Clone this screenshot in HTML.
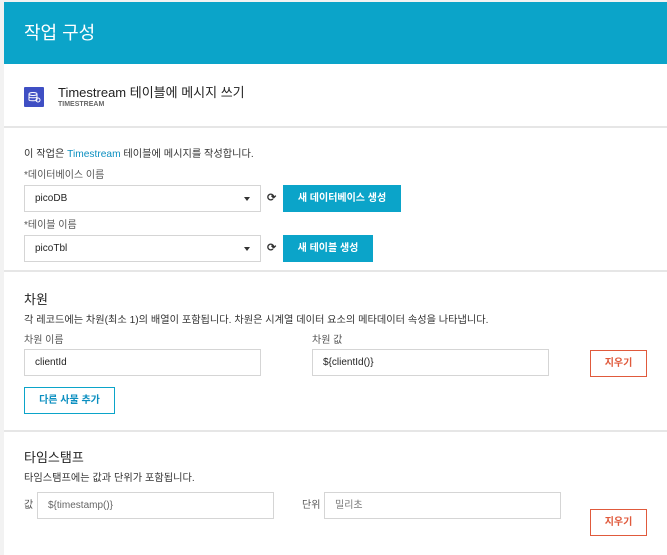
<!DOCTYPE html><html><head><meta charset="utf-8"><style>
*{box-sizing:border-box;margin:0;padding:0}
body{width:667px;height:555px;overflow:hidden;background:#f2f2f2;font-family:"Liberation Sans","Noto Sans CJK KR",sans-serif;color:#333;position:relative;line-height:1.2}
.a{position:absolute}
.main{left:4px;top:2px;width:663px;height:553px;background:#fff}
.hdr{left:4px;top:2px;width:663px;height:62px;background:#0ba4c9;color:#fff;font-size:18px;line-height:62px;padding-left:20px}
.hr{left:4px;width:663px;height:2px;background:#e6e6e6}
.t{font-size:10.2px;color:#333;white-space:nowrap}
.lbl{font-size:10px;color:#555;white-space:nowrap}
.box{border:1px solid #d5d5d5;background:#fff;font-size:10px;padding-left:10px;line-height:26px;color:#222;white-space:nowrap}
.btn{background:#0ba4c9;color:#fff;font-size:10px;font-weight:bold;text-align:center;line-height:28px}
.red{border:1px solid #e05a3c;color:#e05a3c;font-size:10px;font-weight:bold;text-align:center;line-height:26px;background:#fff}
.h2{font-size:13px;color:#222}
</style></head><body>
<div class="a main"></div>
<div class="a hdr">작업 구성</div>
<div class="a" style="left:24px;top:87px;width:20px;height:20px;background:#3f4fc4;border-radius:1px"><svg width="20" height="20"><ellipse cx="9" cy="7" rx="4" ry="1.5" fill="none" stroke="#fff" stroke-width="1"/><path d="M5 7v6c0 1 8 1 8 0V7M5 10c0 1 8 1 8 0" fill="none" stroke="#fff" stroke-width="1"/><circle cx="14" cy="13" r="2" fill="none" stroke="#fff" stroke-width="1"/></svg></div>
<div class="a" style="left:58px;top:85px;font-size:13px;line-height:16px;color:#222;white-space:nowrap">Timestream 테이블에 메시지 쓰기</div>
<div class="a" style="left:58px;top:101px;font-size:7px;line-height:8px;font-weight:bold;color:#666">TIMESTREAM</div>
<div class="a hr" style="top:126px"></div>
<div class="a t" style="left:24px;top:149px">이 작업은 <span style="color:#0b8fc0">Timestream</span> 테이블에 메시지를 작성합니다.</div>
<div class="a lbl" style="left:24px;top:170px">*데이터베이스 이름</div>
<div class="a box" style="left:24px;top:185px;width:237px;height:27px">picoDB</div>
<div class="a" style="left:244px;top:197px;border:3px solid transparent;border-top:4px solid #333"></div>
<div class="a" style="left:267px;top:192px;font-size:11px;font-weight:bold">⟳</div>
<div class="a btn" style="left:283px;top:185px;width:118px;height:27px">새 데이터베이스 생성</div>
<div class="a lbl" style="left:24px;top:220px">*테이블 이름</div>
<div class="a box" style="left:24px;top:235px;width:237px;height:27px">picoTbl</div>
<div class="a" style="left:244px;top:247px;border:3px solid transparent;border-top:4px solid #333"></div>
<div class="a" style="left:267px;top:242px;font-size:11px;font-weight:bold">⟳</div>
<div class="a btn" style="left:283px;top:235px;width:90px;height:27px">새 테이블 생성</div>
<div class="a hr" style="top:270px"></div>
<div class="a h2" style="left:24px;top:292px">차원</div>
<div class="a t" style="left:24px;top:315px">각 레코드에는 차원(최소 1)의 배열이 포함됩니다. 차원은 시계열 데이터 요소의 메타데이터 속성을 나타냅니다.</div>
<div class="a lbl" style="left:24px;top:335px">차원 이름</div>
<div class="a lbl" style="left:312px;top:335px">차원 값</div>
<div class="a box" style="left:24px;top:349px;width:237px;height:27px">clientId</div>
<div class="a box" style="left:312px;top:349px;width:237px;height:27px">${clientId()}</div>
<div class="a red" style="left:590px;top:350px;width:57px;height:27px">지우기</div>
<div class="a" style="left:24px;top:387px;width:91px;height:27px;border:1px solid #0ba4c9;color:#0b8fc0;font-size:10px;font-weight:bold;text-align:center;line-height:26px">다른 사물 추가</div>
<div class="a hr" style="top:430px"></div>
<div class="a h2" style="left:24px;top:450px">타임스탬프</div>
<div class="a t" style="left:24px;top:473px">타임스탬프에는 값과 단위가 포함됩니다.</div>
<div class="a lbl" style="left:24px;top:500px">값</div>
<div class="a box" style="left:37px;top:492px;width:237px;height:27px;color:#666">${timestamp()}</div>
<div class="a lbl" style="left:302px;top:500px">단위</div>
<div class="a box" style="left:324px;top:492px;width:237px;height:27px;color:#777">밀리초</div>
<div class="a red" style="left:590px;top:509px;width:57px;height:27px">지우기</div>
</body></html>
